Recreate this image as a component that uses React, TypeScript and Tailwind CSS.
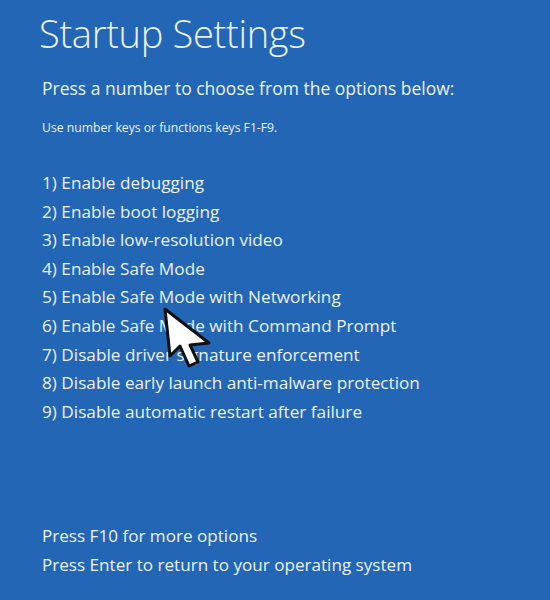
import React from "react";

const options = [
  "1) Enable debugging",
  "2) Enable boot logging",
  "3) Enable low-resolution video",
  "4) Enable Safe Mode",
  "5) Enable Safe Mode with Networking",
  "6) Enable Safe Mode with Command Prompt",
  "7) Disable driver signature enforcement",
  "8) Disable early launch anti-malware protection",
  "9) Disable automatic restart after failure",
];

export default function App() {
  return (
    <div
      className="relative w-[550px] h-[600px] overflow-hidden bg-[#2366b5] text-[#eaf0f8]"
      style={{ fontFamily: '"Open Sans", "Noto Sans", sans-serif' }}
    >
      <div className="flex flex-col pl-[42px] pt-[8px]">
        <h1 className="text-[38px] font-light leading-[50px] -ml-[3px] tracking-[-0.3px]">Startup Settings</h1>
        <p className="mt-[17px] text-[17.5px] leading-[26px]">Press a number to choose from the options below:</p>
        <p className="mt-[18px] text-[12.2px] leading-[18px]">Use number keys or functions keys F1-F9.</p>
        <div className="mt-[32px] flex flex-col">
          {options.map((o) => (
            <div key={o} className="text-[17.2px] leading-[28.6px]">
              {o}
            </div>
          ))}
        </div>
        <div className="mt-[96px] flex flex-col">
          <div className="text-[17.1px] leading-[28.6px]">Press F10 for more options</div>
          <div className="text-[17.1px] leading-[28.6px]">Press Enter to return to your operating system</div>
        </div>
      </div>
      <svg
        className="absolute left-0 top-0"
        width="550"
        height="600"
        viewBox="0 0 550 600"
      >
        <polygon
          points="165,309 170,356 180,346 189,366 198,362 190,345 209,343"
          fill="#ffffff"
          stroke="#111111"
          strokeWidth="3"
          strokeLinejoin="round"
        />
      </svg>
    </div>
  );
}
